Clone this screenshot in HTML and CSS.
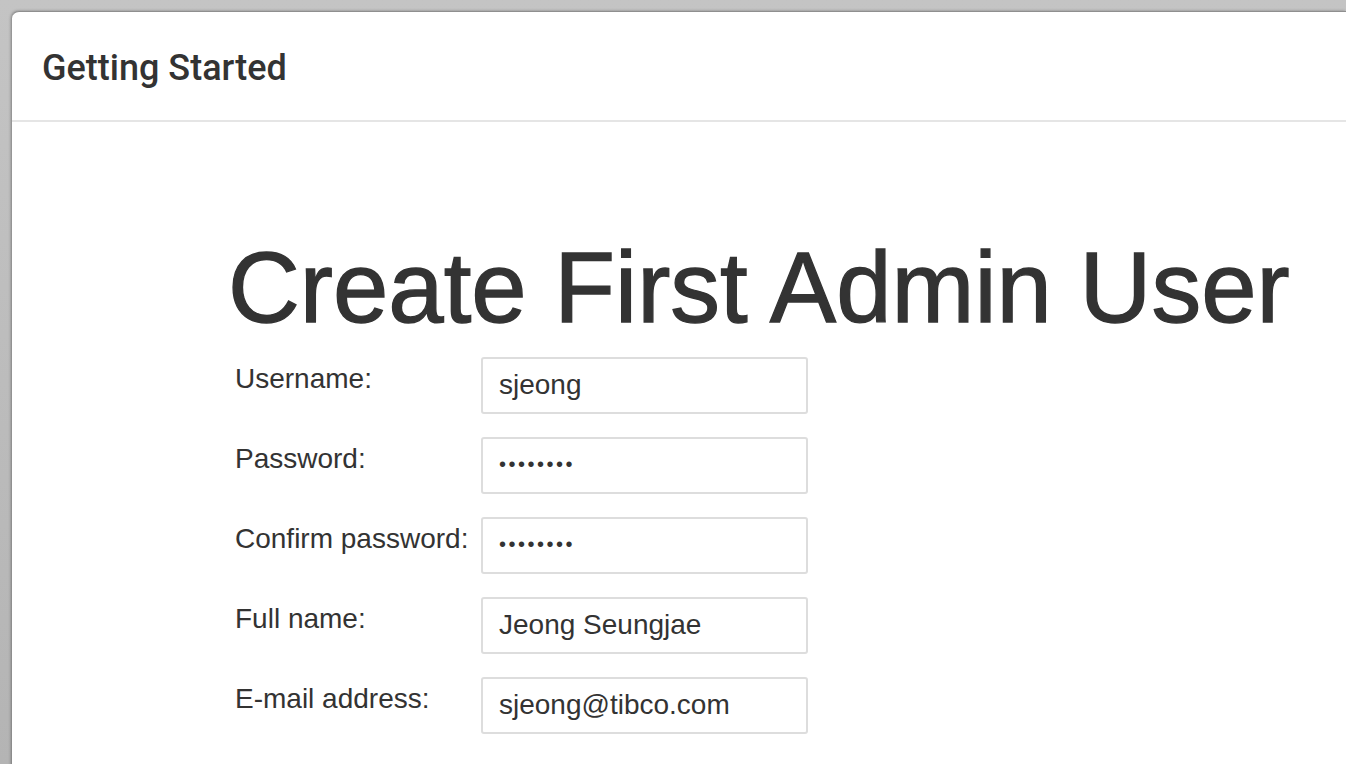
FILE: index.html
```html
<!DOCTYPE html>
<html>
<head>
<meta charset="utf-8">
<link rel="stylesheet" href="styles.css">
</head>
<body>
<div class="panel">
  <div class="panel-header">
    <h2 class="panel-title">Getting Started</h2>
  </div>
  <div class="panel-body">
    <h1 class="title">Create First Admin User</h1>
    <div class="form">
      <div class="row"><label class="label">Username:</label><div class="input">sjeong</div></div>
      <div class="row"><label class="label">Password:</label><div class="input dots">••••••••</div></div>
      <div class="row"><label class="label">Confirm password:</label><div class="input dots">••••••••</div></div>
      <div class="row"><label class="label">Full name:</label><div class="input">Jeong Seungjae</div></div>
      <div class="row"><label class="label">E-mail address:</label><div class="input">sjeong@tibco.com</div></div>
    </div>
  </div>
</div>
</body>
</html>
```
FILE: styles.css
```css
html, body {
  margin: 0;
  padding: 0;
  height: 100%;
  overflow: hidden;
}
body {
  background: linear-gradient(#c4c4c4, #b4b4b4);
  font-family: "Liberation Sans", Arial, sans-serif;
  color: #333;
}
.panel {
  margin: 11px 0 0 12px;
  background: #fff;
  border-top-left-radius: 7px;
  border-top: 1px solid #8f8f8f;
  box-shadow: -1px 0 3px rgba(0,0,0,0.35);
  height: 800px;
}
.panel-header {
  height: 108px;
  border-bottom: 2px solid #e5e5e5;
  display: flex;
  align-items: center;
  padding-left: 30px;
}
.panel-title {
  margin: 0;
  font-family: Roboto, sans-serif;
  font-weight: 500;
  font-size: 36px;
  color: #333;
  padding-top: 4px;
}
.panel-body {
  padding-left: 216px;
}
.title {
  margin: 116px 0 19px 0;
  font-size: 99.5px;
  font-weight: normal;
  line-height: 1;
  color: #333;
  -webkit-text-stroke: 1.3px #333;
}
.form {
  display: flex;
  flex-direction: column;
  gap: 23px;
  padding-left: 7px;
}
.row {
  display: flex;
  align-items: flex-start;
}
.label {
  width: 246px;
  font-size: 28px;
  padding-top: 6px;
  color: #333;
}
.input {
  box-sizing: border-box;
  width: 327px;
  height: 57px;
  border: 2px solid #ddd;
  border-radius: 3px;
  padding: 0 16px;
  font-size: 28px;
  line-height: 52px;
  color: #333;
}
.dots {
  font-size: 20px;
  letter-spacing: 2.5px;
  line-height: 50px;
}
```
